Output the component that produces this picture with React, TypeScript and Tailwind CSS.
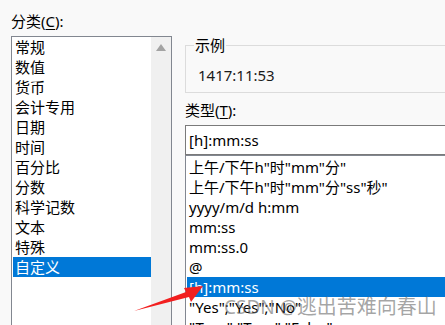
import React from "react";

const categories = [
  "常规",
  "数值",
  "货币",
  "会计专用",
  "日期",
  "时间",
  "百分比",
  "分数",
  "科学记数",
  "文本",
  "特殊",
  "自定义",
];

const formats = [
  '上午/下午h"时"mm"分"',
  '上午/下午h"时"mm"分"ss"秒"',
  "yyyy/m/d h:mm",
  "mm:ss",
  "mm:ss.0",
  "@",
  "[h]:mm:ss",
  '"Yes";"Yes";"No"',
  '"True";"True";"False"',
];

const font = {
  fontFamily: '"Noto Sans", "Noto Sans CJK SC", sans-serif',
};

export default function App() {
  return (
    <div
      className="relative w-[445px] h-[325px] overflow-hidden bg-[#f9f9f9] text-[15px] text-black"
      style={font}
    >
      <div className="flex pl-[11px] pt-[11px]">
        {/* 分类 */}
        <div className="w-[161px] shrink-0">
          <div className="h-[20px] leading-[20px]">
            分类(<span className="underline underline-offset-2">C</span>):
          </div>
          <div className="mt-[5px] h-[300px] flex border border-[#828790] bg-white">
            <div className="flex-1 pl-[1px]">
              {categories.map((c, i) => (
                <div
                  key={c}
                  className={`h-[20px] leading-[20px] pl-[2px] ${
                    i === categories.length - 1 ? "bg-[#0078d7] text-white" : ""
                  }`}
                >
                  {c}
                </div>
              ))}
            </div>
            <div className="w-[20px] bg-[#f0f0f0] flex justify-center pt-[7px]">
              <svg width="10" height="7" viewBox="0 0 10 7">
                <path d="M5 0 L10 7 L0 7 Z" fill="#a3a3a3" />
              </svg>
            </div>
          </div>
        </div>

        {/* 右侧 */}
        <div className="ml-[13px] w-[300px] shrink-0">
          <div className="relative mt-[34px] h-[48px] border border-[#dcdcdc]">
            <span className="absolute left-[8px] top-[-11px] leading-[20px] bg-[#f9f9f9] px-[1px]">
              示例
            </span>
            <div className="pl-[12px] pt-[19px] leading-[20px] text-[#1a1a1a]">
              1417:11:53
            </div>
          </div>
          <div className="mt-[7px] h-[20px] leading-[20px]">
            类型(<span className="underline underline-offset-2">T</span>):
          </div>
          <div className="mt-[5px] h-[30px] border border-[#7a7a7a] bg-white pl-[3px] leading-[28px]">
            [h]:mm:ss
          </div>
          <div className="h-[200px] border border-[#828790] bg-white pt-[1px] pl-[1px]">
            {formats.map((f, i) => (
              <div
                key={f}
                className={`h-[20px] leading-[20px] pl-[2px] whitespace-nowrap ${
                  i === 6 ? "bg-[#0078d7] text-white" : ""
                }`}
              >
                {f}
              </div>
            ))}
          </div>
        </div>
      </div>

      {/* 红色箭头 */}
      <svg
        className="absolute left-0 top-0 pointer-events-none"
        width="445"
        height="325"
        viewBox="0 0 445 325"
      >
        <path
          d="M134 311 L186 292 L184 288 L203 286 L191 302 L189 297 Z"
          fill="#f21f1f"
        />
      </svg>

      {/* 水印 */}
      <div className="absolute left-[224px] top-[292px] flex items-baseline whitespace-nowrap text-[rgba(105,105,105,0.6)] pointer-events-none">
        <span className="text-[19px]">CSDN @</span>
        <span className="text-[20px]">逃出苦难向春山</span>
      </div>
    </div>
  );
}
